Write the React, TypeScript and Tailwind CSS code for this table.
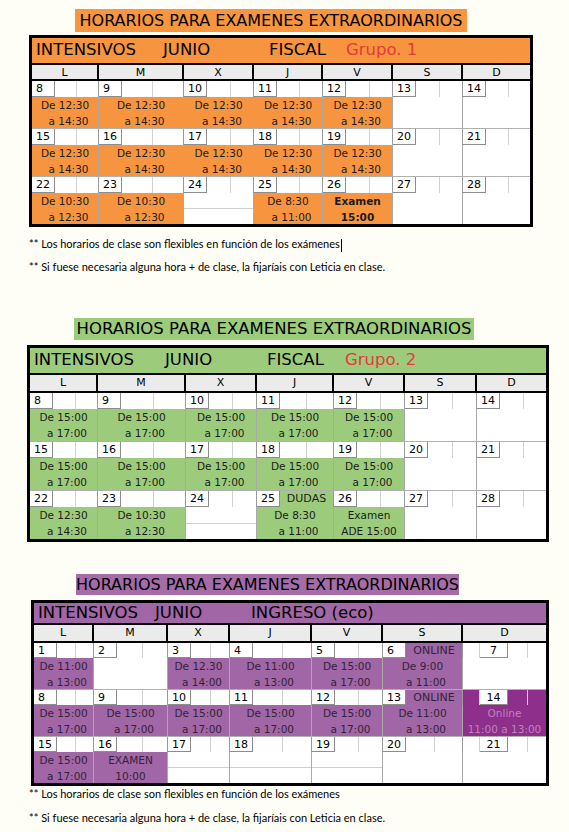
import type { ReactNode } from "react"

const FONT = "font-['DejaVu_Sans',sans-serif]"
const NOTE = "font-['Lato','Liberation_Sans',sans-serif]"

type Day = {
    n: number
    tag?: string // text next to the number (DUDAS, ONLINE)
    lines?: string[]
    bold?: boolean
    split?: boolean // empty white cell with a faint middle line
    dark?: boolean
    shift?: boolean // number box pushed to the right (sunday column of the 3rd table)
}

type Look = {
    fill: string
    dark: string
    ink: string
    cols: string
    box: string
    headH: string
    dayH: string
    dateH: string
    contentH: string
}

const A = ["De 12:30", "a 14:30"]
const B = ["De 15:00", "a 17:00"]

const fiscal1: Day[][] = [
    [{ n: 8, lines: A }, { n: 9, lines: A }, { n: 10, lines: A }, { n: 11, lines: A }, { n: 12, lines: A }, { n: 13 }, { n: 14 }],
    [{ n: 15, lines: A }, { n: 16, lines: A }, { n: 17, lines: A }, { n: 18, lines: A }, { n: 19, lines: A }, { n: 20 }, { n: 21 }],
    [
        { n: 22, lines: ["De 10:30", "a 12:30"] },
        { n: 23, lines: ["De 10:30", "a 12:30"] },
        { n: 24, split: true },
        { n: 25, lines: ["De 8:30", "a 11:00"] },
        { n: 26, lines: ["Examen", "15:00"], bold: true },
        { n: 27 },
        { n: 28 },
    ],
]

const fiscal2: Day[][] = [
    [{ n: 8, lines: B }, { n: 9, lines: B }, { n: 10, lines: B }, { n: 11, lines: B }, { n: 12, lines: B }, { n: 13 }, { n: 14 }],
    [{ n: 15, lines: B }, { n: 16, lines: B }, { n: 17, lines: B }, { n: 18, lines: B }, { n: 19, lines: B }, { n: 20 }, { n: 21 }],
    [
        { n: 22, lines: ["De 12:30", "a 14:30"] },
        { n: 23, lines: ["De 10:30", "a 12:30"] },
        { n: 24, split: true },
        { n: 25, tag: "DUDAS", lines: ["De 8:30", "a 11:00"] },
        { n: 26, lines: ["Examen", "ADE 15:00"] },
        { n: 27 },
        { n: 28 },
    ],
]

const ingreso: Day[][] = [
    [
        { n: 1, lines: ["De 11:00", "a 13:00"] },
        { n: 2 },
        { n: 3, lines: ["De 12.30", "a 14:00"] },
        { n: 4, lines: ["De 11:00", "a 13:00"] },
        { n: 5, lines: B },
        { n: 6, tag: "ONLINE", lines: ["De 9:00", "a 11:00"] },
        { n: 7, shift: true },
    ],
    [
        { n: 8, lines: B }, { n: 9, lines: B }, { n: 10, lines: B }, { n: 11, lines: B }, { n: 12, lines: B },
        { n: 13, tag: "ONLINE", lines: ["De 11:00", "a 13:00"] },
        { n: 14, shift: true, dark: true, lines: ["Online", "11:00 a 13:00"] },
    ],
    [
        { n: 15, lines: B },
        { n: 16, lines: ["EXAMEN", "10:00"] },
        { n: 17, split: true },
        { n: 18, split: true },
        { n: 19, split: true },
        { n: 20 },
        { n: 21, shift: true },
    ],
]

const days = ["L", "M", "X", "J", "V", "S", "D"]

function DateCell({ d, look, last }: { d: Day; look: Look; last: boolean }) {
    return (
        <div className={`flex ${look.dateH} ${last ? "" : "border-r border-[#9a9a9a]"} ${d.dark ? look.dark : "bg-white"}`}>
            {d.shift && <div className="w-[17px] border-r border-[#d2d2d2]" />}
            <div className={`${d.shift ? "w-[28px] text-center" : "w-[23px] pl-[4px]"} shrink-0 bg-white border-r border-b border-[#8c8c8c] text-[11px] leading-[15px] text-black`}>
                {d.n}
            </div>
            {d.tag ? (
                <div className={`flex-1 ${look.fill} text-center text-[11px] leading-[16px] ${look.ink}`}>{d.tag}</div>
            ) : (
                <>
                    <div className="flex-1 border-r border-[#d2d2d2]" />
                    <div className="flex-1" />
                </>
            )}
        </div>
    )
}

function ContentCell({ d, look, last }: { d: Day; look: Look; last: boolean }) {
    const edge = last ? "" : "border-r border-[#a9a9a9]"
    if (d.split) {
        return (
            <div className={`flex flex-col bg-white ${look.contentH} ${edge}`}>
                <div className="flex-1 border-b border-[#cfcfcf]" />
                <div className="flex-1" />
            </div>
        )
    }
    if (!d.lines) return <div className={`bg-white ${look.contentH} ${edge}`} />
    const bg = d.dark ? look.dark : look.fill
    const ink = d.dark ? "text-[#bf82bd]" : look.ink
    return (
        <div className={`flex flex-col items-center justify-center ${bg} ${ink} ${look.contentH} ${edge} text-[10.5px] leading-[16px] ${d.bold ? "font-bold" : ""}`}>
            <span>{d.lines[0]}</span>
            <span className={d.lines[1].startsWith("a ") ? "pl-[7px]" : ""}>{d.lines[1]}</span>
        </div>
    )
}

function Schedule({ look, head, weeks }: { look: Look; head: ReactNode; weeks: Day[][] }) {
    return (
        <div className={`${look.box} border-[3px] border-black bg-white ${FONT}`}>
            <div className={`flex items-center whitespace-nowrap ${look.headH} ${look.fill} pl-[4px] text-[16.5px] text-black`}>{head}</div>
            <div className={`grid ${look.cols} border-y-2 border-black`}>
                {days.map((l, i) => (
                    <div key={l} className={`${look.dayH} bg-[#ebebeb] text-center text-[11px] leading-[15px] text-black ${i < 6 ? "border-r-2 border-black" : ""}`}>
                        {l}
                    </div>
                ))}
            </div>
            {weeks.map((w, wi) => (
                <div key={wi}>
                    <div className={`grid ${look.cols} ${wi > 0 ? "border-t border-[#b0b0b0]" : ""}`}>
                        {w.map((d, i) => <DateCell key={i} d={d} look={look} last={i === 6} />)}
                    </div>
                    <div className={`grid ${look.cols}`}>
                        {w.map((d, i) => <ContentCell key={i} d={d} look={look} last={i === 6} />)}
                    </div>
                </div>
            ))}
        </div>
    )
}

const orange: Look = {
    fill: "bg-[#f7943f]",
    dark: "bg-[#f7943f]",
    ink: "text-[#1c1c1c]",
    cols: "grid-cols-[67px_85px_70px_69px_70px_70px_67px]",
    box: "ml-[29px] w-[504px]",
    headH: "h-[25px]",
    dayH: "h-[14px]",
    dateH: "h-[16px]",
    contentH: "h-[31px]",
}

const green: Look = {
    fill: "bg-[#9dcb7c]",
    dark: "bg-[#9dcb7c]",
    ink: "text-[#1c1c1c]",
    cols: "grid-cols-[68px_88px_71px_77px_71px_72px_69px]",
    box: "ml-[27px] w-[522px]",
    headH: "h-[25px]",
    dayH: "h-[16px]",
    dateH: "h-[16px]",
    contentH: "h-[32px]",
}

const purple: Look = {
    fill: "bg-[#a166a5]",
    dark: "bg-[#8e2f8c]",
    ink: "text-[#33233a]",
    cols: "grid-cols-[60px_74px_62px_82px_71px_80px_83px]",
    box: "ml-[31px] w-[518px]",
    headH: "h-[20px]",
    dayH: "h-[16px]",
    dateH: "h-[15px]",
    contentH: "h-[31px]",
}

function Notes({ cursor, tight }: { cursor?: boolean; tight?: boolean }) {
    const line = tight ? "h-[16px] leading-[16px]" : "h-[18px] leading-[18px]"
    return (
        <>
            <p className={line}>
                ** Los horarios de clase son flexibles en función de los exámenes
                {cursor && <span className="ml-[1px] inline-block h-[13px] w-px bg-black align-middle" />}
            </p>
            <p className={`${tight ? "mt-[8px]" : "mt-[5px]"} ${line}`}>** Si fuese necesaria alguna hora + de clase, la fijaríais con Leticia en clase.</p>
        </>
    )
}

export default function App() {
    return (
        <div className="w-[569px] h-[832px] overflow-hidden bg-[#fffef6] text-black">
            {/* grupo 1 */}
            <div className={`ml-[75px] mt-[9px] h-[23px] w-[392px] whitespace-nowrap bg-[#f7963f] text-center text-[16px] leading-[23px] ${FONT}`}>
                HORARIOS PARA EXAMENES EXTRAORDINARIOS
            </div>
            <div className="mt-[3px]">
                <Schedule
                    look={orange}
                    weeks={fiscal1}
                    head={<>
                        <span className="w-[127px]">INTENSIVOS</span>
                        <span className="w-[106px]">JUNIO</span>
                        <span className="w-[77px]">FISCAL</span>
                        <span className="text-[#e8393b]">Grupo. 1</span>
                    </>}
                />
            </div>
            <div className={`ml-[29px] mt-[8px] text-[11px] ${NOTE}`}>
                <Notes cursor />
            </div>

            {/* grupo 2 */}
            <div className={`ml-[74px] mt-[42px] h-[22px] w-[400px] whitespace-nowrap bg-[#9dcb7c] text-center text-[16.5px] leading-[22px] ${FONT}`}>
                HORARIOS PARA EXAMENES EXTRAORDINARIOS
            </div>
            <div className="mt-[5px]">
                <Schedule
                    look={green}
                    weeks={fiscal2}
                    head={<>
                        <span className="w-[131px]">INTENSIVOS</span>
                        <span className="w-[102px]">JUNIO</span>
                        <span className="w-[78px]">FISCAL</span>
                        <span className="text-[#e8393b]">Grupo. 2</span>
                    </>}
                />
            </div>

            {/* ingreso */}
            <div className={`ml-[76px] mt-[32px] h-[21px] w-[383px] whitespace-nowrap bg-[#a56ca8] text-center text-[16px] leading-[21px] ${FONT}`}>
                HORARIOS PARA EXAMENES EXTRAORDINARIOS
            </div>
            <div className="mt-[5px]">
                <Schedule
                    look={purple}
                    weeks={ingreso}
                    head={<>
                        <span className="w-[117px]">INTENSIVOS</span>
                        <span className="w-[96px]">JUNIO</span>
                        <span>INGRESO (eco)</span>
                    </>}
                />
            </div>
            <div className={`ml-[29px] text-[11px] ${NOTE}`}>
                <Notes tight />
            </div>
        </div>
    )
}
